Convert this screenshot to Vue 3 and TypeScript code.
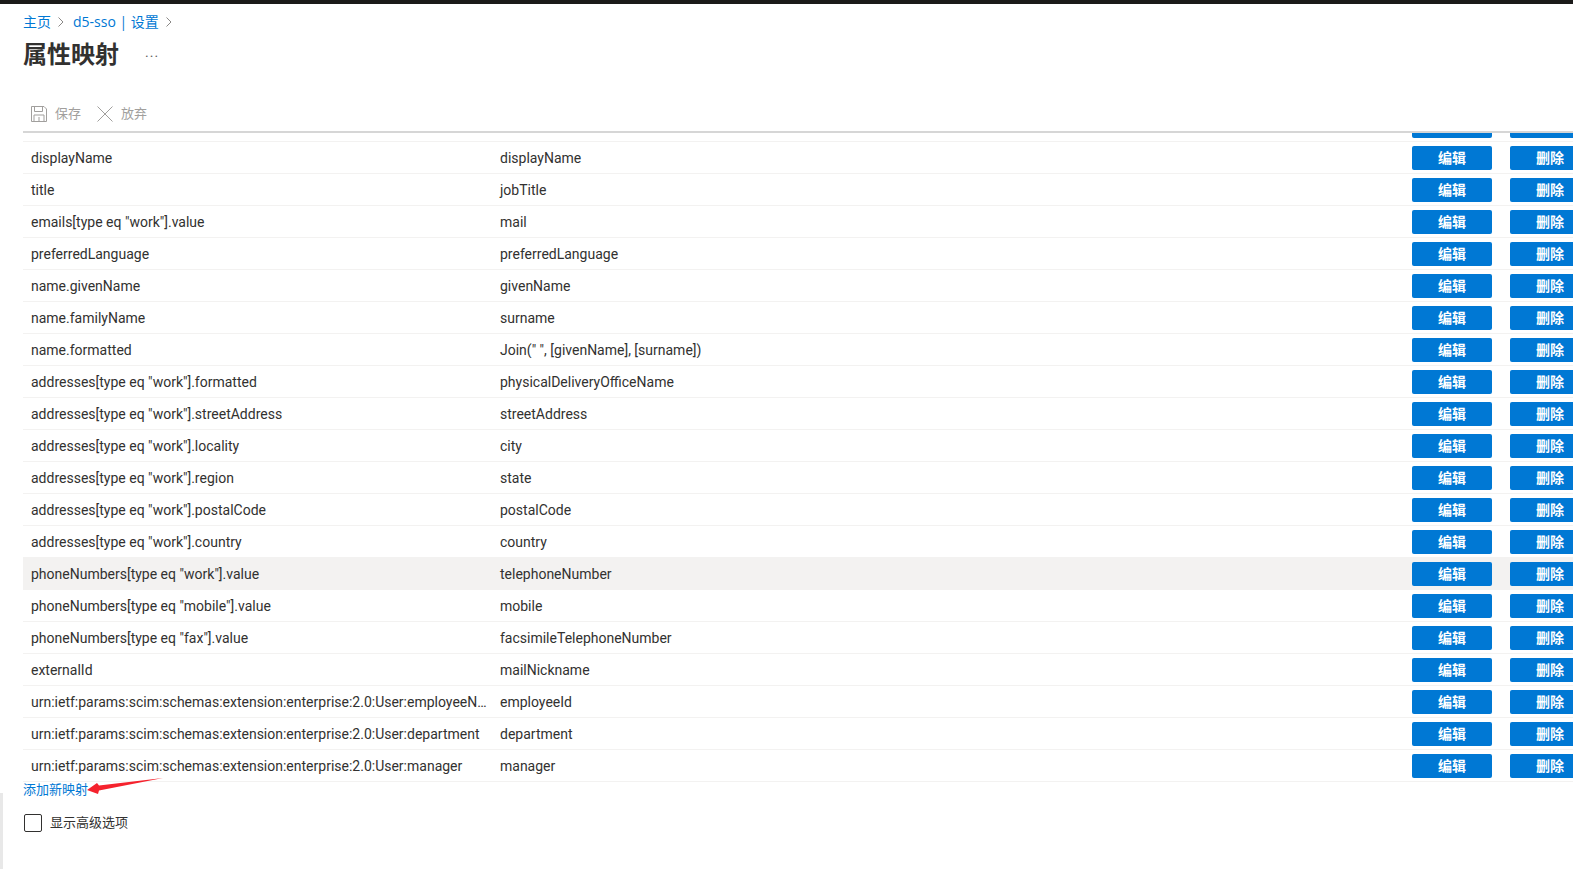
<script setup lang="ts">
interface Mapping {
  source: string
  target: string
  hot?: boolean
}

const mappings: Mapping[] = [
  { source: 'displayName', target: 'displayName' },
  { source: 'title', target: 'jobTitle' },
  { source: 'emails[type eq "work"].value', target: 'mail' },
  { source: 'preferredLanguage', target: 'preferredLanguage' },
  { source: 'name.givenName', target: 'givenName' },
  { source: 'name.familyName', target: 'surname' },
  { source: 'name.formatted', target: 'Join(" ", [givenName], [surname])' },
  { source: 'addresses[type eq "work"].formatted', target: 'physicalDeliveryOfficeName' },
  { source: 'addresses[type eq "work"].streetAddress', target: 'streetAddress' },
  { source: 'addresses[type eq "work"].locality', target: 'city' },
  { source: 'addresses[type eq "work"].region', target: 'state' },
  { source: 'addresses[type eq "work"].postalCode', target: 'postalCode' },
  { source: 'addresses[type eq "work"].country', target: 'country' },
  { source: 'phoneNumbers[type eq "work"].value', target: 'telephoneNumber', hot: true },
  { source: 'phoneNumbers[type eq "mobile"].value', target: 'mobile' },
  { source: 'phoneNumbers[type eq "fax"].value', target: 'facsimileTelephoneNumber' },
  { source: 'externalId', target: 'mailNickname' },
  { source: 'urn:ietf:params:scim:schemas:extension:enterprise:2.0:User:employeeNumber', target: 'employeeId' },
  { source: 'urn:ietf:params:scim:schemas:extension:enterprise:2.0:User:department', target: 'department' },
  { source: 'urn:ietf:params:scim:schemas:extension:enterprise:2.0:User:manager', target: 'manager' },
]
</script>

<template>
  <div class="page">
    <div class="topbar"></div>
    <main class="content">
      <nav class="crumbs">
        <a>主页</a>
        <svg class="chev" width="8" height="12" viewBox="0 0 8 12"><path d="M1.500 1.500 6 6l-4.500 4.500" /></svg>
        <a>d5-sso | 设置</a>
        <svg class="chev" width="8" height="12" viewBox="0 0 8 12"><path d="M1.500 1.500 6 6l-4.500 4.500" /></svg>
      </nav>
      <header class="title-row">
        <h1>属性映射</h1>
        <span class="more">...</span>
      </header>
      <div class="toolbar">
        <span class="tool">
          <svg width="16" height="16" viewBox="0 0 16 16" class="tool-icon">
            <path d="M.5.5h12.500l2.500 2.500v12.500H.5zM3.500.5v5h8v-5M3 15.500v-6.500h10v6.500M8 11v4.500" />
          </svg>
          <span>保存</span>
        </span>
        <span class="tool">
          <svg width="16" height="16" viewBox="0 0 16 16" class="tool-icon">
            <path d="M.5.500l15 15M15.500.500l-15 15" />
          </svg>
          <span>放弃</span>
        </span>
      </div>
      <section class="table">
        <div class="row stub">
          <span class="btn"></span>
          <span class="btn second"></span>
        </div>
        <div v-for="m in mappings" :key="m.source" class="row" :class="{ hot: m.hot }">
          <div class="cell source">{{ m.source }}</div>
          <div class="cell target">{{ m.target }}</div>
          <button class="btn">编辑</button>
          <button class="btn second">删除</button>
        </div>
      </section>
      <a class="add">添加新映射</a>
      <label class="advanced">
        <span class="box"></span>
        <span class="adv-text">显示高级选项</span>
      </label>
    </main>
    <svg class="arrow" width="80" height="20" viewBox="0 0 80 20">
      <path d="M0 13 10 6 12 8.500 76 1 12 13.500 11 17z" fill="#f5222d" />
    </svg>
    <div class="edge"></div>
  </div>
</template>

<style scoped>
.page {
  position: relative;
  width: 1573px;
  height: 869px;
  overflow: hidden;
  background: #fff;
  font-family: Roboto, "Noto Sans CJK SC", sans-serif;
  color: #323130;
  font-size: 14px;
}
.topbar {
  height: 4px;
  background: #1b1a19;
}
.content {
  padding-left: 23px;
}
.crumbs {
  display: flex;
  align-items: center;
  height: 34px;
  font-family: "Open Sans", "Noto Sans CJK SC", sans-serif;
  font-size: 14px;
  color: #0078d4;
}
.chev {
  margin: 2px 8px 0 6px;
  fill: none;
  stroke: #8a8886;
  stroke-width: 1;
}
.title-row {
  display: flex;
  align-items: center;
  height: 33px;
}
h1 {
  margin: 2px 0 0;
  font-size: 24px;
  font-weight: 700;
  line-height: 31px;
  color: #323130;
}
.more {
  margin: -6px 0 0 26px;
  font-size: 14px;
  letter-spacing: 1px;
  color: #605e5c;
}
.toolbar {
  display: flex;
  align-items: center;
  gap: 16px;
  height: 62px;
  padding: 22px 0 0 8px;
  box-sizing: border-box;
  border-bottom: 2px solid #d6d6d6;
  color: #a19f9d;
  font-size: 13px;
}
.tool {
  display: flex;
  align-items: center;
  gap: 8px;
}
.tool-icon {
  margin-top: 4px;
  fill: none;
  stroke: #a19f9d;
  stroke-width: 1;
}
.table {
  width: 1550px;
  overflow: hidden;
}
.row {
  display: flex;
  align-items: center;
  height: 32px;
  box-sizing: border-box;
  border-bottom: 1px solid #f3f2f1;
}
.row.hot {
  background: #f3f2f1;
}
.row.stub {
  height: 9px;
  align-items: flex-end;
  justify-content: flex-end;
  padding-bottom: 3px;
  overflow: hidden;
}
.cell {
  box-sizing: border-box;
  padding-left: 8px;
  white-space: nowrap;
  overflow: hidden;
  text-overflow: ellipsis;
}
.source {
  width: 469px;
  padding-right: 2px;
  flex: none;
}
.target {
  flex: 1;
}
.btn {
  display: block;
  flex: none;
  width: 80px;
  height: 24px;
  padding: 0 0 2px;
  box-sizing: border-box;
  border: 0;
  border-radius: 2px;
  background: #0078d4;
  color: #fff;
  font: 600 14px "Noto Sans CJK SC", sans-serif;
}
.btn.second {
  margin-left: 18px;
  margin-right: -17px;
}
.add {
  display: block;
  height: 20px;
  line-height: 16px;
  color: #0078d4;
  font-size: 13px;
}
.advanced {
  display: flex;
  align-items: center;
  gap: 8px;
  height: 28px;
  margin: 7px 0 0 1px;
  font-size: 13px;
}
.adv-text {
  margin-top: -4px;
}
.box {
  box-sizing: border-box;
  width: 18px;
  height: 18px;
  border: 1px solid #323130;
  border-radius: 2px;
}
.arrow {
  position: absolute;
  left: 87px;
  top: 777px;
}
.edge {
  position: absolute;
  left: 0;
  top: 793px;
  bottom: 0;
  width: 3px;
  background: #e8e8e8;
}
</style>
